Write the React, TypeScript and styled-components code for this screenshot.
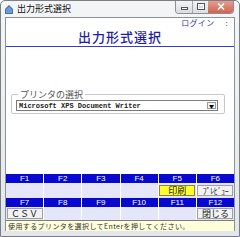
import styled, { createGlobalStyle } from 'styled-components';

const GlobalStyle = createGlobalStyle`
  html, body {
    margin: 0;
    padding: 0;
    background: #ffffff;
  }
  body {
    font-family: 'Noto Sans CJK JP', 'Liberation Sans', sans-serif;
  }
`;

const WindowFrame = styled.div`
  width: 240px;
  height: 237px;
  box-sizing: border-box;
  border: 1px solid #7a7f86;
  border-radius: 5px 5px 0 0;
  background: linear-gradient(#f4f5f7, #e3e6ea);
  display: flex;
  flex-direction: column;
  overflow: hidden;
`;

const TitleBar = styled.div`
  height: 16px;
  display: flex;
  align-items: flex-start;
  padding-left: 4px;
`;

const AppIcon = styled.svg`
  width: 8px;
  height: 9px;
  margin-top: 4px;
`;

const TitleText = styled.span`
  font-size: 9px;
  line-height: 10px;
  margin-top: 3px;
  margin-left: 4px;
  color: #111;
  flex: 1;
`;

const CaptionGroup = styled.div`
  display: flex;
  margin-top: -1px;
  margin-right: 5px;
  border: 1px solid #8b9097;
  border-top: none;
  border-radius: 0 0 4px 4px;
  overflow: hidden;
  height: 13px;
`;

const CaptionButton = styled.div<{ $width: number; $close?: boolean }>`
  width: ${(p) => p.$width}px;
  display: flex;
  align-items: center;
  justify-content: center;
  background: ${(p) =>
    p.$close
      ? 'linear-gradient(#e8a196, #d2634f)'
      : 'linear-gradient(#f4f5f6, #d9dde2)'};
  border-left: ${(p) => (p.$close ? 'none' : '1px solid #a5aab0')};
  &:first-child {
    border-left: none;
  }
`;

const ClientArea = styled.div`
  margin: 0 4px;
  height: 214px;
  box-sizing: border-box;
  border: 1px solid #8d9299;
  border-bottom: none;
  background: #ffffff;
  display: flex;
  flex-direction: column;
`;

const LoginRow = styled.div`
  display: flex;
  justify-content: flex-end;
  gap: 11px;
  padding-right: 6px;
  height: 11px;
  font-size: 8px;
  line-height: 9px;
  letter-spacing: 0.3px;
  color: #3535b0;
`;

const PageTitle = styled.h1`
  margin: 0;
  height: 17px;
  border-bottom: 1px solid #3a3ad0;
  text-align: center;
  font-size: 13px;
  line-height: 15px;
  font-weight: 500;
  letter-spacing: 1px;
  color: #1e1ea6;
`;

const GroupBox = styled.fieldset`
  margin: 43px 9px 0 5px;
  padding: 1px 6px 5px 4px;
  border: 1px solid #c8c8c8;
  border-radius: 2px;
  height: 24px;
  box-sizing: border-box;
`;

const GroupLegend = styled.legend`
  font-size: 9px;
  line-height: 9px;
  color: #555;
  padding: 0 2px;
  margin-left: 2px;
`;

const SelectBox = styled.div`
  height: 11px;
  box-sizing: border-box;
  border: 1px solid #7b7b7b;
  display: flex;
  align-items: center;
  justify-content: space-between;
  padding: 0 1px 0 2px;
  background: #fff;
`;

const SelectText = styled.span`
  font-family: 'Liberation Mono', monospace;
  font-size: 7px;
  line-height: 8px;
  font-weight: bold;
  color: #222;
`;

const DropButton = styled.span`
  width: 9px;
  height: 7px;
  box-sizing: border-box;
  border: 1px solid #9a9a9a;
  background: #f2f2f2;
  font-size: 5px;
  line-height: 5px;
  text-align: center;
  color: #000;
`;

const KeyPanel = styled.div<{ $first?: boolean }>`
  margin-top: ${(p) => (p.$first ? 'auto' : '0')};
  display: grid;
  grid-template-columns: repeat(6, 1fr);
  column-gap: 1px;
  background: #ffffff;
`;

const KeyLabel = styled.div`
  height: 9px;
  background: #0808d0;
  color: #ffffff;
  font-family: 'Liberation Sans', sans-serif;
  font-size: 8px;
  line-height: 9px;
  text-align: center;
`;

const KeySlot = styled.div<{ $height: number }>`
  height: ${(p) => p.$height}px;
  background: #e6e6fa;
  display: flex;
  align-items: center;
  justify-content: center;
`;

const KeyButton = styled.div<{ $yellow?: boolean; $small?: boolean }>`
  width: 36px;
  height: 11px;
  box-sizing: border-box;
  border: 1px solid ${(p) => (p.$yellow ? '#8a8a20' : '#a0a0a0')};
  background: ${(p) => (p.$yellow ? '#ffff33' : '#f2f2f2')};
  display: flex;
  align-items: center;
  justify-content: center;
  font-size: ${(p) => (p.$small ? '8px' : '9px')};
  letter-spacing: ${(p) => (p.$small ? '-0.5px' : '0')};
  line-height: 9px;
  color: #222;
  white-space: nowrap;
`;

const StatusBar = styled.div`
  height: 11px;
  box-sizing: border-box;
  border-top: 1px solid #7d7d7d;
  background: #ffffdc;
  font-size: 7px;
  letter-spacing: 0.4px;
  line-height: 10px;
  padding-left: 2px;
  color: #333;
  white-space: nowrap;
  overflow: hidden;
`;

const keys = [
  { label: 'F1' },
  { label: 'F2' },
  { label: 'F3' },
  { label: 'F4' },
  { label: 'F5', text: '印刷', yellow: true },
  { label: 'F6', text: 'ﾌﾟﾚﾋﾞｭｰ', small: true },
  { label: 'F7', text: 'ＣＳＶ' },
  { label: 'F8' },
  { label: 'F9' },
  { label: 'F10' },
  { label: 'F11' },
  { label: 'F12', text: '閉じる' },
];

function App() {
  const rows = [keys.slice(0, 6), keys.slice(6, 12)];

  return (
    <>
      <GlobalStyle />
      <WindowFrame>
        <TitleBar>
          <AppIcon viewBox="0 0 8 9">
            <path d="M0 9 V4 L4 0 L8 4 V9 Z" fill="#3f73b8" />
            <path d="M1 8 V4.5 L4 1.5 L7 4.5 V8 Z" fill="#6b9ad6" />
          </AppIcon>
          <TitleText>出力形式選択</TitleText>
          <CaptionGroup>
            <CaptionButton $width={16}>
              <svg width="7" height="7" viewBox="0 0 7 7">
                <rect x="0.5" y="4.5" width="6" height="2" fill="#fff" stroke="#555" />
              </svg>
            </CaptionButton>
            <CaptionButton $width={15}>
              <svg width="8" height="7" viewBox="0 0 8 7">
                <rect x="0.5" y="0.5" width="7" height="6" fill="#fff" stroke="#555" />
                <rect x="2" y="2.5" width="4" height="2.5" fill="#d9dde2" />
              </svg>
            </CaptionButton>
            <CaptionButton $width={25} $close>
              <svg width="8" height="7" viewBox="0 0 8 7">
                <path d="M1 0.5 L7 6.5 M7 0.5 L1 6.5" stroke="#fff" strokeWidth="1.6" />
              </svg>
            </CaptionButton>
          </CaptionGroup>
        </TitleBar>
        <ClientArea>
          <LoginRow>
            <span>ログイン</span>
            <span>:</span>
          </LoginRow>
          <PageTitle>出力形式選択</PageTitle>
          <GroupBox>
            <GroupLegend>プリンタの選択</GroupLegend>
            <SelectBox>
              <SelectText>Microsoft XPS Document Writer</SelectText>
              <DropButton>▼</DropButton>
            </SelectBox>
          </GroupBox>
          {rows.map((row, r) => (
            <KeyPanel key={r} $first={r === 0}>
              {row.map((k) => (
                <KeyLabel key={k.label}>{k.label}</KeyLabel>
              ))}
              {row.map((k) => (
                <KeySlot key={k.label + 's'} $height={r === 0 ? 15 : 13}>
                  {k.text && (
                    <KeyButton $yellow={k.yellow} $small={k.small}>
                      {k.text}
                    </KeyButton>
                  )}
                </KeySlot>
              ))}
            </KeyPanel>
          ))}
          <StatusBar>使用するプリンタを選択してEnterを押してください。</StatusBar>
        </ClientArea>
      </WindowFrame>
    </>
  );
}

export default App;
